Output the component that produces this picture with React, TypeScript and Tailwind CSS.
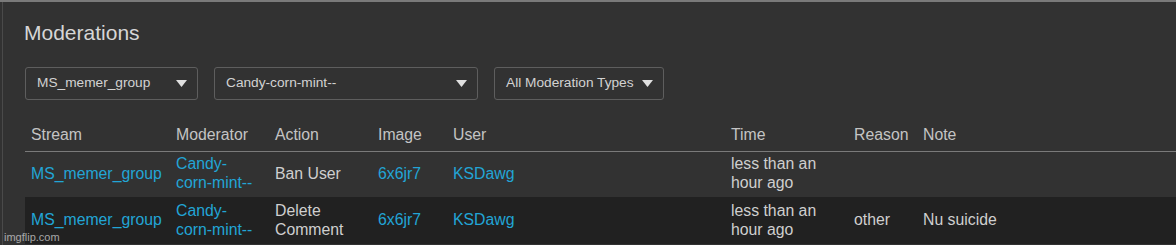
import { useState } from "react";

const rows = [
  { stream: "MS_memer_group", mod: "Candy-corn-mint--", action: "Ban User", image: "6x6jr7", user: "KSDawg", time: "less than an hour ago", reason: "", note: "" },
  { stream: "MS_memer_group", mod: "Candy-corn-mint--", action: "Delete Comment", image: "6x6jr7", user: "KSDawg", time: "less than an hour ago", reason: "other", note: "Nu suicide" },
];

function Select({ label, width }: { label: string; width: string }) {
  return (
    <div className={`${width} h-[33px] flex items-center justify-between pl-[11px] pr-[10px] border border-[#5e5e5e] rounded-[3px] text-[13.7px] text-[#d2d2d2]`}>
      <span>{label}</span>
      <svg width="11" height="7" viewBox="0 0 11 7">
        <path d="M0 0h11L5.5 7z" fill="#e0e0e0" />
      </svg>
    </div>
  );
}

export default function App() {
  const [filters] = useState(["MS_memer_group", "Candy-corn-mint--", "All Moderation Types"]);

  return (
    <div className="relative w-[1176px] h-[245px] overflow-hidden bg-[#323232] border-t-2 border-[#7a7a7a] font-['Liberation_Sans',Arial,sans-serif]">
      <div className="flex h-full">
        {/* left rule */}
        <div className="w-[3px] shrink-0 border-r border-[#4a4a4a]" />

        <div className="flex-1 pl-[22px]">
          <h1 className="pt-[19px] -ml-px text-[21px] leading-[24px] text-[#d6d6d6]">Moderations</h1>

          <div className="flex gap-[16px] mt-[22px]">
            <Select label={filters[0]} width="w-[173px]" />
            <Select label={filters[1]} width="w-[264px]" />
            <Select label={filters[2]} width="w-[170px]" />
          </div>

          <table className="mt-[19px] w-full table-fixed border-collapse text-[15.8px] leading-[19px] text-[#cfcfcf]">
            <colgroup>
              <col className="w-[145px]" />
              <col className="w-[99px]" />
              <col className="w-[103px]" />
              <col className="w-[75px]" />
              <col className="w-[278px]" />
              <col className="w-[123px]" />
              <col className="w-[69px]" />
              <col />
            </colgroup>
            <thead>
              <tr className="border-b border-[#7a7a7a] text-[#c4c4c4]">
                <th className="text-left font-normal px-[6px] h-[32px]">Stream</th>
                <th className="text-left font-normal px-[6px]">Moderator</th>
                <th className="text-left font-normal px-[6px]">Action</th>
                <th className="text-left font-normal px-[6px]">Image</th>
                <th className="text-left font-normal px-[6px]">User</th>
                <th className="text-left font-normal px-[6px]">Time</th>
                <th className="text-left font-normal px-[6px]">Reason</th>
                <th className="text-left font-normal px-[6px]">Note</th>
              </tr>
            </thead>
            <tbody>
              {rows.map((r, i) => (
                <tr key={i} className={i % 2 ? "bg-[#212121] h-[47px]" : "h-[46px]"}>
                  <td className="px-[6px] pb-[2px] text-[#22a5d6]">{r.stream}</td>
                  <td className="px-[6px] pb-[2px] text-[#22a5d6]">Candy-<br />corn-mint--</td>
                  <td className="px-[6px] pb-[2px]">{r.action === "Delete Comment" ? <>Delete<br />Comment</> : r.action}</td>
                  <td className="px-[6px] pb-[2px] text-[#22a5d6]">{r.image}</td>
                  <td className="px-[6px] pb-[2px] text-[#22a5d6]">{r.user}</td>
                  <td className="px-[6px] pb-[2px]">less than an<br />hour ago</td>
                  <td className="px-[6px] pb-[2px]">{r.reason}</td>
                  <td className="px-[6px] pb-[2px]">{r.note}</td>
                </tr>
              ))}
            </tbody>
          </table>
        </div>
      </div>

      {/* watermark */}
      <span className="absolute left-[4px] bottom-[1px] text-[11px] leading-[13px] text-[#c8c8c8] opacity-80">imgflip.com</span>
    </div>
  );
}
